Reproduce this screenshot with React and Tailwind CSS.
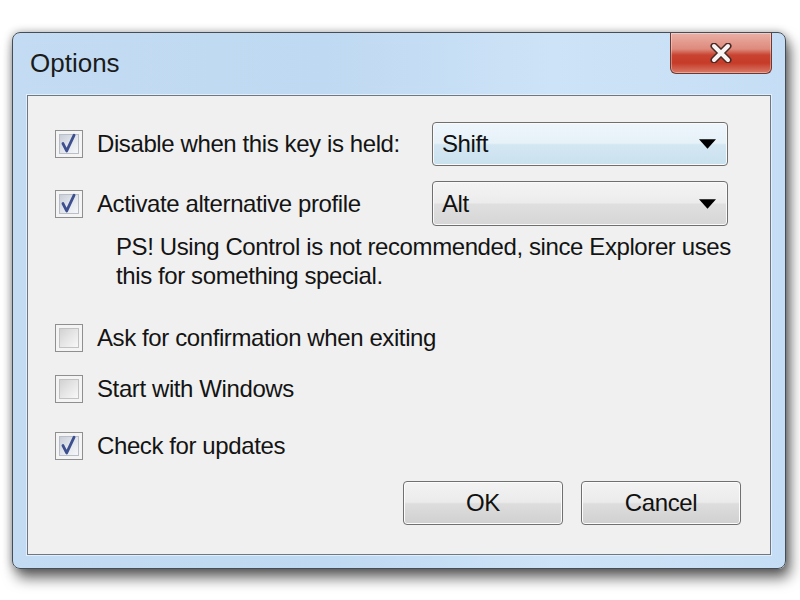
function CheckMark() {
    return (
        <svg viewBox="0 0 28 28" className="absolute inset-0 h-full w-full">
            <path
                d="M7.5 13.5 L11.5 21.5 L19.5 4.5"
                fill="none"
                stroke="#3d4f8f"
                strokeWidth="3"
                strokeLinecap="round"
                strokeLinejoin="round"
            />
        </svg>
    );
}

function Checkbox({ checked }) {
    return (
        <div className="relative h-[28px] w-[28px] shrink-0 border border-[#8e8f8f] bg-[#f4f4f4] p-[3px]">
            <div
                className={
                    checked
                        ? 'h-full w-full border border-[#b9bfc9] bg-gradient-to-br from-[#c9ced8] via-[#e2e6ec] to-[#f6f7f9]'
                        : 'h-full w-full border border-[#c2c2c2] bg-gradient-to-br from-[#d2d2d2] via-[#e6e6e6] to-[#f8f8f8]'
                }
            />
            {checked && <CheckMark />}
        </div>
    );
}

function Combo({ value, active }) {
    return (
        <div
            className={[
                'flex h-full w-[296px] items-center justify-between rounded-[4px] border border-[#6f6f6f] pl-[9px] pr-[11px] shadow-[inset_0_0_0_1px_#fafafa]',
                active
                    ? 'bg-[linear-gradient(to_bottom,#eef6fb_0%,#e6f1f8_48%,#d3e7f2_52%,#c9e1ee_100%)]'
                    : 'bg-[linear-gradient(to_bottom,#f4f4f4_0%,#ececec_48%,#dfdfdf_52%,#d6d6d6_100%)]',
            ].join(' ')}
        >
            <span className="text-[#111]">{value}</span>
            <svg viewBox="0 0 18 10" className="h-[10px] w-[17px]">
                <path d="M0 0 H18 L9 10 Z" fill="#000" />
            </svg>
        </div>
    );
}

function Option({ checked, children, className = '' }) {
    return (
        <div className={'flex h-[28px] items-center ' + className}>
            <Checkbox checked={checked} />
            <span className="ml-[14px] text-[#141414]">{children}</span>
        </div>
    );
}

function DialogButton({ children }) {
    return (
        <button className="flex h-[44px] w-[160px] items-center justify-center rounded-[4px] border border-[#707070] bg-[linear-gradient(to_bottom,#f3f3f3_0%,#ebebeb_48%,#dddddd_52%,#d0d0d0_100%)] text-[#111] shadow-[inset_0_0_0_1px_#fcfcfc]">
            {children}
        </button>
    );
}

function CloseButton() {
    return (
        <div className="-mr-[1px] flex h-[41px] w-[102px] items-center justify-center rounded-b-[6px] border border-t-0 border-[#70392f] bg-[linear-gradient(to_bottom,#eab0a6_0%,#de8a7c_40%,#c94331_55%,#c63b28_75%,#d97a69_100%)] shadow-[inset_0_0_0_1px_rgba(255,255,255,0.35)]">
            <svg viewBox="0 0 24 20" className="h-[20px] w-[24px]">
                <path d="M5 3 L19 17 M19 3 L5 17" stroke="#4a2a25" strokeWidth="7" strokeLinecap="round" />
                <path d="M5 3 L19 17 M19 3 L5 17" stroke="#f7f4f3" strokeWidth="4" strokeLinecap="round" />
            </svg>
        </div>
    );
}

export default function App() {
    return (
        <div className="h-[600px] w-[800px] overflow-hidden bg-white pl-[12px] pt-[32px] font-['Liberation_Sans',Arial,sans-serif] text-[24px] leading-none tracking-[-0.4px]">
            <div className="flex h-[537px] w-[774px] flex-col rounded-[8px] border border-[#474d54] bg-[linear-gradient(to_right,#c3dcf3_0%,#bfd9f2_40%,#cde3f7_70%,#c6def5_100%)] px-[14px] pb-[13px] shadow-[4px_9px_14px_rgba(0,0,0,0.6),0_0_8px_rgba(0,0,0,0.3)]">
                <div className="flex h-[62px] items-start justify-between">
                    <div className="pl-[3px] pt-[15px] text-[26px] leading-[30px] tracking-normal text-[#1b1b1b]">Options</div>
                    <CloseButton />
                </div>

                <div className="flex flex-1 flex-col border border-[#6c7883] bg-[#f0f0f0] pl-[27px] pt-[26px] shadow-[0_0_0_1px_#e4eef8]">
                    <div className="flex h-[44px] items-center">
                        <Checkbox checked />
                        <span className="ml-[14px] w-[335px] text-[#141414]">Disable when this key is held:</span>
                        <Combo value="Shift" active />
                    </div>

                    <div className="mt-[15px] flex h-[45px] items-center">
                        <Checkbox checked />
                        <span className="ml-[14px] w-[335px] text-[#141414]">Activate alternative profile</span>
                        <Combo value="Alt" />
                    </div>

                    <p className="ml-[61px] mt-[6px] leading-[29px] text-[#141414]">
                        PS! Using Control is not recommended, since Explorer uses
                        <br />
                        this for something special.
                    </p>

                    <Option className="mt-[34px]">Ask for confirmation when exiting</Option>
                    <Option className="mt-[23px]">Start with Windows</Option>
                    <Option className="mt-[29px]" checked>
                        Check for updates
                    </Option>

                    <div className="mt-[21px] flex justify-end gap-[18px] pr-[29px]">
                        <DialogButton>OK</DialogButton>
                        <DialogButton>Cancel</DialogButton>
                    </div>
                </div>
            </div>
        </div>
    );
}
